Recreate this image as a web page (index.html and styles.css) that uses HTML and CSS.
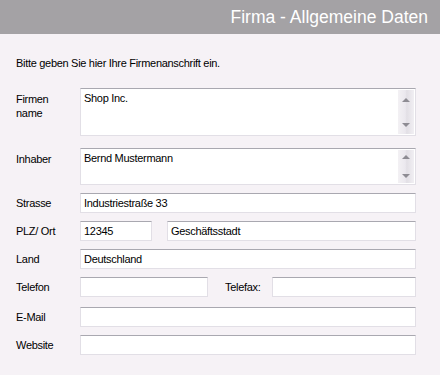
FILE: index.html
```html
<!DOCTYPE html>
<html>
<head>
	<meta charset="utf-8">
	<title>Firma - Allgemeine Daten</title>
	<link rel="stylesheet" href="styles.css">
</head>
<body>

	<div class="kopfC">Firma - Allgemeine Daten</div>

	<section class="inhaltC">
		<p class="hinweisC">Bitte geben Sie hier Ihre Firmenanschrift ein.</p>

		<div class="formC">
			<label class="lblC lblTopC">Firmen<br>name</label>
			<div class="areaC areaHochC">
				<div class="areaTextC">Shop Inc.</div>
				<div class="scrollC"><span class="aufC"></span><span class="abC"></span></div>
			</div>

			<label class="lblC lblTopC lblInhC">Inhaber</label>
			<div class="areaC areaNiedrigC">
				<div class="areaTextC">Bernd Mustermann</div>
				<div class="scrollC"><span class="aufC"></span><span class="abC"></span></div>
			</div>

			<label class="lblC">Strasse</label>
			<input class="feldC" type="text" value="Industriestraße 33">

			<label class="lblC">PLZ/ Ort</label>
			<div class="zeileC">
				<input class="feldC plzC" type="text" value="12345">
				<input class="feldC ortC" type="text" value="Geschäftsstadt">
			</div>

			<label class="lblC">Land</label>
			<input class="feldC" type="text" value="Deutschland">

			<label class="lblC">Telefon</label>
			<div class="zeileC">
				<input class="feldC telC" type="text" value="">
				<label class="lblC faxLblC">Telefax:</label>
				<input class="feldC faxC" type="text" value="">
			</div>

			<label class="lblC lblMailC">E-Mail</label>
			<input class="feldC mailC" type="text" value="">

			<label class="lblC">Website</label>
			<input class="feldC" type="text" value="">
		</div>
	</section>

</body>
</html>
```

FILE: styles.css
```css
*,*:after,*:before{border: 0;margin: 0;padding: 0;box-sizing: border-box;}
body{
	width: 440px;
	height: 375px;
	background-color: #f6f2f6;
	font-family: "Liberation Sans", Arial, sans-serif;
	font-size: 11px;
	letter-spacing: -0.3px;
	color: #000;
	overflow: hidden;
}

.kopfC{
	height: 34px;
	line-height: 34px;
	background-color: #a4a2a5;
	color: #fff;
	font-size: 17.5px;
	letter-spacing: 0;
	text-align: right;
	padding-right: 12px;
}

.inhaltC{padding: 22px 24px 0 16px;}
.hinweisC{line-height: 14px; margin-bottom: 18px;}

.formC{
	display: grid;
	grid-template-columns: 64px 336px;
	row-gap: 8px;
}

.lblC{
	display: flex;
	align-items: center;
	line-height: 14px;
}
.lblTopC{align-items: flex-start; padding-top: 4px;}
.lblInhC{padding-top: 4px;}

.feldC, .areaC{
	background: #fff;
	border: 1px solid #e2dfe6;
	border-top-color: #a9a8b0;
	font-family: "Liberation Sans", Arial, sans-serif;
	font-size: 11px;
	letter-spacing: -0.3px;
	color: #000;
}
.feldC{
	height: 20px;
	width: 100%;
	padding: 0 3px;
	outline: none;
}
.mailC{margin-top: 2px;}
.lblMailC{margin-top: 2px;}

.areaC{display: flex;}
.areaHochC{height: 48px; margin-bottom: 4px;}
.areaNiedrigC{height: 37px;}
.areaTextC{flex: 1; padding: 2px 3px; line-height: 14px;}

.scrollC{
	width: 16px;
	margin: 1px 1px 1px 0;
	background: linear-gradient(to right, #f3f1f4 0, #ebe8ee 45%, #e2dfe5 55%, #f1eff3 100%);
	display: flex;
	flex-direction: column;
	justify-content: space-between;
	align-items: center;
	padding: 8px 0 7px;
}
.aufC{
	width: 0; height: 0;
	border-left: 4px solid transparent;
	border-right: 4px solid transparent;
	border-bottom: 4px solid #8e8c93;
}
.abC{
	width: 0; height: 0;
	border-left: 4px solid transparent;
	border-right: 4px solid transparent;
	border-top: 4px solid #8e8c93;
}
.areaNiedrigC .scrollC{padding: 5px 0 5px;}

.zeileC{display: flex; align-items: center;}
.plzC{width: 72px; margin-right: 15px;}
.ortC{flex: 1;}
.telC{width: 128px;}
.faxLblC{width: 64px; padding-left: 17px;}
.faxC{flex: 1;}
```
